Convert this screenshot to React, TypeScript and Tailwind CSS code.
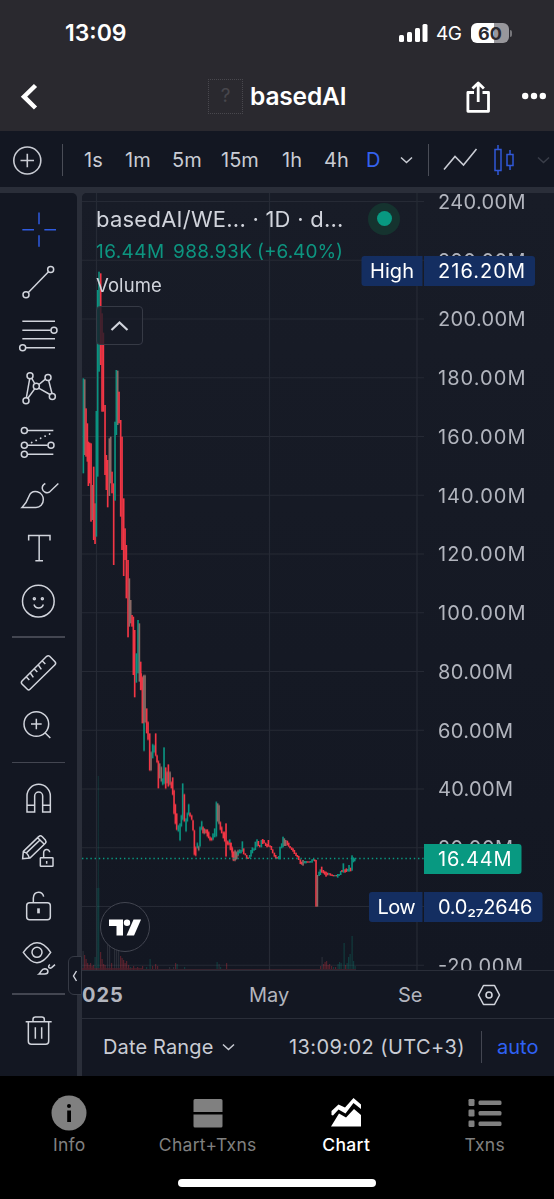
import type { ReactNode } from 'react';

type Bar = [x: number, top: number, bottom: number, kind: 'g' | 'r' | 'm'];

const barColors = { g: '#0b9280', r: '#f23645', m: '#8a6a66' };

// Price bars, three segments, each in thirds of a pixel from its own origin
const segments: { x: number; y: number; bars: Bar[] }[] = [
  {
    x: -7,
    y: 147,
    bars: [
      [25, 115, 400, 'g'], [29, 118, 345, 'm'], [33, 205, 350, 'r'], [37, 250, 365, 'r'],
      [40, 305, 438, 'r'], [44, 308, 430, 'r'], [48, 310, 545, 'r'], [52, 435, 540, 'm'],
      [56, 380, 600, 'r'], [60, 490, 612, 'r'], [64, 213, 590, 'g'], [68, -150, 410, 'g'],
      [72, -205, 95, 'g'], [77, -200, 75, 'r'], [81, -80, 215, 'r'], [85, -22, 215, 'r'],
      [90, 195, 405, 'r'], [94, 345, 450, 'r'], [98, 360, 502, 'r'], [103, 295, 468, 'm'],
      [107, 290, 430, 'm'], [111, 395, 460, 'r'], [116, 430, 675, 'r'], [120, 245, 482, 'g'],
      [124, 90, 285, 'g'], [128, 92, 255, 'm'], [132, 155, 250, 'r'], [137, 240, 530, 'r'],
      [141, 290, 630, 'r'], [146, 475, 708, 'r'], [150, 565, 660, 'r'], [154, 615, 775, 'r'],
      [159, 660, 892, 'r'], [163, 715, 860, 'm'], [167, 780, 850, 'm'], [171, 825, 860, 'r'],
      [175, 830, 1005, 'r'], [179, 870, 1072, 'r'], [184, 940, 1028, 'g'], [189, 840, 1000, 'g'],
      [193, 850, 1025, 'm'], [197, 965, 1050, 'r'],
    ],
  },
  {
    x: 28,
    y: 477,
    bars: [
      [93, 10, 60, 'r'], [97, 20, 160, 'r'], [101, 15, 160, 'm'], [102, 160, 243, 'g'],
      [105, 15, 158, 'm'], [110, 115, 190, 'r'], [114, 155, 210, 'r'], [119, 190, 302, 'r'],
      [123, 245, 302, 'm'], [128, 222, 265, 'g'], [132, 225, 248, 'g'], [137, 190, 258, 'r'],
      [141, 255, 278, 'r'], [145, 272, 355, 'r'], [149, 280, 325, 'm'], [154, 290, 335, 'm'],
      [158, 325, 345, 'g'], [162, 232, 342, 'g'], [167, 292, 356, 'r'], [171, 305, 340, 'm'],
      [175, 283, 350, 'r'], [180, 305, 345, 'm'], [184, 335, 355, 'r'], [188, 322, 375, 'r'],
      [192, 360, 432, 'r'], [196, 402, 462, 'r'], [200, 430, 480, 'r'], [205, 465, 485, 'g'],
      [210, 460, 512, 'g'], [214, 435, 470, 'g'], [218, 340, 450, 'g'], [223, 372, 455, 'r'],
      [228, 445, 485, 'g'], [232, 428, 455, 'g'], [236, 402, 435, 'g'], [240, 428, 440, 'r'],
      [245, 435, 450, 'r'], [249, 450, 482, 'r'], [253, 480, 555, 'r'], [257, 530, 558, 'r'],
      [262, 518, 535, 'g'], [266, 528, 542, 'm'], [270, 470, 530, 'g'], [275, 453, 480, 'g'],
      [279, 470, 490, 'r'], [283, 475, 492, 'm'], [288, 478, 490, 'r'], [292, 478, 500, 'r'],
      [296, 485, 505, 'r'], [300, 500, 512, 'r'], [305, 503, 512, 'r'], [309, 490, 510, 'g'],
      [314, 475, 502, 'g'], [319, 395, 500, 'g'], [323, 400, 455, 'm'], [327, 405, 462, 'm'],
      [331, 455, 480, 'r'], [335, 470, 490, 'r'], [340, 485, 505, 'r'], [344, 485, 515, 'r'],
      [348, 460, 560, 'r'], [353, 512, 525, 'r'], [357, 515, 525, 'r'], [361, 518, 540, 'r'],
      [366, 530, 548, 'r'], [370, 545, 572, 'm'], [375, 540, 573, 'm'], [379, 545, 568, 'm'],
      [384, 540, 558, 'm'],
    ],
  },
  {
    x: 148,
    y: 607,
    bars: [
      [-1, 118, 128, 'g'], [3, 128, 150, 'r'], [7, 145, 172, 'r'], [11, 155, 182, 'r'],
      [16, 155, 180, 'm'], [20, 158, 176, 'm'], [24, 155, 165, 'g'], [29, 148, 160, 'g'],
      [33, 150, 160, 'g'], [37, 124, 155, 'g'], [41, 145, 163, 'r'], [46, 160, 166, 'r'],
      [50, 165, 176, 'r'], [54, 172, 177, 'r'], [59, 165, 175, 'g'], [63, 150, 170, 'g'],
      [67, 142, 160, 'g'], [72, 145, 152, 'g'], [76, 125, 150, 'g'], [81, 118, 140, 'g'],
      [85, 123, 138, 'r'], [89, 135, 142, 'r'], [94, 120, 142, 'g'], [98, 117, 132, 'r'],
      [102, 120, 130, 'r'], [107, 128, 138, 'r'], [111, 132, 142, 'r'], [115, 120, 140, 'r'],
      [120, 136, 142, 'r'], [124, 138, 150, 'r'], [128, 148, 160, 'r'], [133, 158, 170, 'r'],
      [137, 165, 176, 'r'], [141, 171, 176, 'r'], [146, 168, 178, 'g'], [150, 140, 178, 'g'],
      [155, 130, 145, 'g'], [159, 110, 142, 'g'], [163, 115, 138, 'm'], [167, 120, 138, 'm'],
      [172, 122, 136, 'r'], [176, 128, 140, 'r'], [180, 138, 145, 'r'], [185, 142, 150, 'r'],
      [189, 145, 155, 'r'], [193, 150, 162, 'r'], [198, 158, 168, 'r'], [202, 165, 172, 'r'],
      [206, 168, 180, 'r'], [211, 178, 192, 'r'], [215, 185, 194, 'r'], [219, 180, 197, 'm'],
      [224, 183, 190, 'g'], [228, 183, 190, 'g'], [232, 184, 188, 'r'], [237, 184, 188, 'r'],
      [241, 183, 188, 'g'], [246, 178, 188, 'g'], [250, 177, 182, 'g'], [254, 178, 184, 'r'],
      [258, 180, 320, 'r'], [262, 225, 320, 'm'], [267, 215, 228, 'g'], [271, 208, 225, 'g'],
      [275, 200, 218, 'r'], [280, 210, 220, 'r'], [284, 214, 224, 'r'], [288, 215, 230, 'r'],
      [293, 218, 226, 'r'], [297, 219, 224, 'g'], [301, 220, 227, 'r'], [306, 223, 228, 'r'],
      [310, 225, 229, 'r'], [314, 225, 229, 'g'], [319, 225, 229, 'r'], [323, 222, 233, 'g'],
      [327, 222, 228, 'g'], [332, 213, 225, 'g'], [336, 210, 216, 'r'], [340, 190, 218, 'g'],
      [345, 208, 218, 'r'], [349, 205, 216, 'r'], [353, 207, 214, 'g'], [357, 195, 215, 'g'],
      [362, 203, 214, 'r'], [366, 166, 212, 'g'], [370, 172, 187, 'g'], [374, 175, 184, 'g'],
    ],
  },
];

// [x, height, kind] from the bottom edge of the plot
const volumes: [number, number, 'g' | 'r' | 'm'][] = [
  [0.5, 19, 'm'], [2, 15, 'r'], [3.5, 11, 'r'], [5, 7, 'r'], [6.5, 5, 'r'], [8, 7, 'r'],
  [9.5, 4, 'r'], [11, 5, 'r'], [12.5, 13, 'g'], [18, 18, 'r'], [19.5, 11, 'r'],
  [21, 6, 'r'], [22.5, 5, 'r'], [25, 30, 'm'], [27, 28, 'm'], [29, 7, 'r'],
  [32, 22, 'm'], [34, 26, 'm'], [36, 24, 'm'], [38, 14, 'r'], [39.5, 12, 'r'], [41, 10, 'r'],
  [42.5, 7, 'r'], [44, 9, 'r'], [46, 5, 'r'], [48, 3, 'g'], [51, 4, 'r'], [55, 3, 'r'],
  [60, 4, 'r'], [64, 3, 'g'], [67.5, 11, 'g'], [70, 4, 'r'], [73, 6, 'r'], [75, 4, 'r'],
  [87, 3, 'm'], [91, 3, 'm'], [93, 7, 'r'], [94.5, 6, 'g'], [102, 3, 'g'], [134.5, 8, 'g'],
  [136.5, 6, 'm'], [138, 3, 'g'], [144, 7, 'r'], [238, 4, 'r'], [239.5, 13, 'm'],
  [241, 6, 'r'], [242.5, 8, 'r'], [244, 9, 'r'], [245.5, 5, 'r'], [247, 6, 'r'], [249, 4, 'r'],
  [251, 3, 'g'], [253, 3, 'r'], [255.5, 6, 'g'], [257, 8, 'g'], [258.5, 7, 'g'],
  [261.5, 27, 'g'], [263, 5, 'r'], [264.5, 7, 'g'], [266, 13, 'g'], [267.5, 16, 'g'],
  [269.5, 34, 'g'], [271, 9, 'g'], [272.5, 4, 'g'],
];

const priceLabels = [
  '240.00M', '220.00M', '200.00M', '180.00M', '160.00M', '140.00M', '120.00M',
  '100.00M', '80.00M', '60.00M', '40.00M', '20.00M', '', '-20.00M',
];

const intervals = [
  { label: '1s', cell: 'w-[41px]' },
  { label: '1m', cell: 'w-[47px]' },
  { label: '5m', cell: 'w-[49px]' },
  { label: '15m', cell: 'w-[61px]' },
  { label: '1h', cell: 'w-[42px]' },
  { label: '4h', cell: 'w-[42px]' },
];

interface Tool {
  y: number;
  art: ReactNode;
}

const drawTools: Tool[] = [
  {
    y: 118.5,
    art: <path className="stroke-[#2f5be0]" d="M67 119H102M133 119H168M117 67V102M117 135V170" />,
  },
  {
    y: 277.5,
    art: (
      <>
        <circle cx="152" cy="238" r="9" />
        <circle cx="78" cy="314" r="9" />
        <path d="M85 307L145.500 244.500" />
      </>
    ),
  },
  {
    y: 436.5,
    art: (
      <>
        <path d="M67 393H165M67 420H152M67 446H165M78 473H165" />
        <circle cx="162" cy="420" r="9" />
        <circle cx="68" cy="473" r="9" />
      </>
    ),
  },
  {
    y: 595.5,
    art: (
      <>
        <path d="M89 566L79 623M95 564L104 580M117 583L136 567M116 594L150 613M104 596L83 625M146 571L156 610" />
        <circle cx="90" cy="557" r="9" />
        <circle cx="144" cy="562" r="9" />
        <circle cx="109" cy="588" r="9" />
        <circle cx="78" cy="632" r="9" />
        <circle cx="157" cy="619" r="9" />
      </>
    ),
  },
  {
    y: 94.5,
    art: (
      <>
        <path d="M83 61H160M83 105H143M83 132H160" />
        <path d="M95 97L152 70" strokeDasharray="0.1 14.800" strokeLinecap="round" strokeWidth="5.500" />
        <circle cx="73" cy="61" r="9" />
        <circle cx="73" cy="105" r="9" />
        <circle cx="153" cy="105" r="9" />
        <circle cx="73" cy="132" r="9" />
      </>
    ),
  },
  {
    y: 253.5,
    art: (
      <path d="M66 292C78 280 82 272 87 258C92 246 103 243 112 245C124 248 130 259 130 268C130 282 120 292 108 292ZM136 220C128 224 126 230 127 236C129 246 140 250 148 246L175 220" />
    ),
  },
  { y: 412.5, art: <path d="M86 391V376H150V391M117.500 376V452M106 452H129" /> },
  {
    y: 571.5,
    art: (
      <>
        <circle cx="115" cy="573" r="47.500" />
        <circle cx="103" cy="566" r="3" />
        <circle cx="127" cy="566" r="3" />
        <path d="M102 583C106 597 126 597 130 583" />
      </>
    ),
  },
];

const measureTools: Tool[] = [
  {
    y: 159,
    art: (
      <>
        <path d="M140 110Q145 106 149 110L165 126Q169 131 165 135L90 209Q86 213 82 209L66 193Q62 188 66 184Z" />
        <path d="M79 172l9 9M91 160l9 13M103 148l9 9M115 136l9 13M127 124l9 9" />
      </>
    ),
  },
  {
    y: 318,
    art: (
      <>
        <circle cx="109" cy="313" r="37" />
        <path d="M93 313H125M109 297V329M135 339L151 355" />
      </>
    ),
  },
];

const stateTools: Tool[] = [
  {
    y: 536,
    art: (
      <path d="M81 576V528A35 35 0 0 1 151 528V576H128V528A12 12 0 0 0 104 528V576ZM81 556H104M128 556H151" />
    ),
  },
  {
    y: 65,
    art: (
      <>
        <path d="M68 86L70 64L116 20Q121 14 127 20L136 30Q140 35 136 40L90 84ZM70 66Q82 66 88 84M80 68L120 30M113 23L133 43" />
        <rect x="121" y="83" width="38" height="26" rx="2" />
        <path d="M131 83V68A9 9 0 0 1 149 67M140 93V101" />
      </>
    ),
  },
  {
    y: 224,
    art: (
      <>
        <rect x="80" y="218" width="71" height="51" rx="9" />
        <path d="M100 218V204C101 193 107 187 116 187C124 187 129 192 131 200" />
        <path d="M115.500 235V250" strokeWidth="8" />
      </>
    ),
  },
  {
    y: 383,
    art: (
      <>
        <path d="M70 367C86 345 100 338 111 338C122 338 137 345 152 367C137 390 122 398 111 398C100 398 86 390 70 367Z" />
        <circle cx="111" cy="367" r="15" />
        <path d="M117 432C125 426 124 416 134 416C147 417 147 432 134 432ZM150 404C142 408 147 418 155 413L165 404" />
      </>
    ),
  },
];

const removeTools: Tool[] = [
  {
    y: 601,
    art: (
      <path d="M77 577H155M99 577V570Q99 563 106 563H126Q133 563 133 570V577M85 577V636Q85 645 94 645H137Q146 645 146 636V577M106 594V628M125 594V628" />
    ),
  },
];

function ToolGroup({ tools }: { tools: Tool[] }) {
  return (
    <div className="flex flex-col items-center">
      {tools.map((tool) => (
        <button key={tool.y} className="flex h-[53px] items-center">
          <svg
            className="h-11 w-11"
            viewBox={`51 ${tool.y - 65} 132 132`}
            fill="none"
            stroke="#d1d4dc"
            strokeWidth={4.5}
          >
            {tool.art}
          </svg>
        </button>
      ))}
    </div>
  );
}

function Divider() {
  return <div className="my-[9px] ml-3 h-[1.5px] w-[53px] bg-[#434651]" />;
}

function Chevron({ className }: { className: string }) {
  return (
    <svg className={className} viewBox="0 0 13 8" fill="none" stroke="currentColor" strokeWidth={1.5}>
      <path d="M1 1.500L6.500 6.500L12 1.500" />
    </svg>
  );
}

function StatusBar() {
  return (
    <div className="flex h-[66px] items-center pl-[65px] text-white">
      <span className="w-[334px] text-[23px] font-semibold">13:09</span>
      <svg className="h-[18px] w-[29px]" viewBox="0 0 29 18" fill="white">
        <rect x="0" y="11" width="5" height="7" rx="1.500" />
        <rect x="8" y="8" width="5" height="10" rx="1.500" />
        <rect x="16" y="4" width="5" height="14" rx="1.500" />
        <rect x="23.500" y="0" width="5" height="18" rx="1.500" />
      </svg>
      <span className="ml-2 w-[35px] pt-0.5 text-[19px] tracking-[-0.5px]">4G</span>
      <div className="relative flex h-5 w-[38px] items-center justify-center rounded-[6px] bg-[linear-gradient(90deg,#fff_60%,#98979c_60%)] text-[18px] font-bold text-[#2a292f]">
        60
        <span className="absolute -right-[3px] h-[7px] w-[2px] rounded-r bg-[#77767b]" />
      </div>
    </div>
  );
}

function Header() {
  return (
    <div className="flex h-[65px] items-center pb-1 text-white">
      <svg className="ml-5 h-7 w-[18px]" viewBox="0 0 18 28" fill="none" stroke="white" strokeWidth={4.5}>
        <path d="M15.500 2.500L4 13.700L15.500 25" />
      </svg>
      <div className="ml-[170px] flex h-[35px] w-[35px] items-center justify-center border border-dotted border-[#49484e] text-[19px] text-[#47464c]">
        ?
      </div>
      <h1 className="ml-[7px] w-[216px] text-[24.5px] font-semibold tracking-[-0.15px]">basedAI</h1>
      <svg className="h-8 w-6" viewBox="0 0 24 32" fill="none" stroke="white" strokeWidth={2.8}>
        <path d="M8 11.500H1.900V30.300H22.500V11.500H16.500M12.200 21V3M6.500 7.500L12.200 2L17.900 7.500" strokeLinejoin="round" />
      </svg>
      <svg className="mb-0.5 ml-8 h-2 w-6" viewBox="0 0 24 8" fill="white">
        <circle cx="3.200" cy="4" r="3.200" />
        <circle cx="12" cy="4" r="3.200" />
        <circle cx="20.800" cy="4" r="3.200" />
      </svg>
    </div>
  );
}

function IntervalBar() {
  return (
    <div className="flex h-14 items-center bg-[#131722] pt-px text-[20px] text-[#c9ccd4]">
      <svg className="ml-3 h-[30px] w-[30px]" viewBox="0 0 30 30" fill="none" stroke="currentColor" strokeWidth={1.6}>
        <circle cx="15.300" cy="15.500" r="13.500" />
        <path d="M8.500 15.500H22M15.300 8.700V22.300" />
      </svg>
      <div className="ml-5 mr-[21px] h-8 w-px bg-[#4a4d57]" />
      {intervals.map((item) => (
        <button key={item.label} className={`pt-px text-left ${item.cell}`}>
          {item.label}
        </button>
      ))}
      <button className="w-[34px] pt-px text-left text-[#3563ee]">D</button>
      <Chevron className="h-2 w-[13px]" />
      <div className="ml-[15px] h-8 w-px bg-[#4a4d57]" />
      <svg className="ml-3.5 h-6 w-[35px]" viewBox="0 0 35 24" fill="none" stroke="currentColor" strokeWidth={1.6}>
        <path d="M1 21.500L12 8.500L20.500 17L33.500 1" />
      </svg>
      <svg className="ml-[15px] h-[30px] w-6" viewBox="0 0 24 30" fill="none" stroke="#3058d8" strokeWidth={1.5}>
        <path d="M2 4.500H8V25.500H2ZM5 0V4.500M5 25.500V30M14 9.500H20V20.500H14ZM17 5V9.500M17 20.500V25" />
      </svg>
      <Chevron className="ml-5 h-2 w-[13px] shrink-0 text-[#3a3e49]" />
    </div>
  );
}

function PriceTag({ y, name, value, width }: { y: number; name?: string; value: string; width: number }) {
  const nameX = name === 'High' ? 279.5 : 287;
  return (
    <g fontSize="20" fill="white">
      {name && (
        <>
          <path d={`M340.5 ${y}H${nameX + 3}q-3 0 -3 3v24q0 3 3 3H340.500z`} fill="#142e61" />
          <text x={nameX + 8.500} y={y + 22} textLength={name === 'High' ? 44 : 38}>
            {name}
          </text>
        </>
      )}
      <path d={`M342 ${y}h${width - 3}q3 0 3 3v24q0 3 -3 3h-${width - 3}z`} fill={name ? '#142e61' : '#089981'} />
      <text x="356" y={y + 22} textLength={width - 24}>
        {value}
      </text>
    </g>
  );
}

function Plot() {
  return (
    <svg className="block h-[777px] w-[472px]" viewBox="0 0 472 777">
      {/* Grid */}
      <g stroke="#262a35" strokeWidth="1.200">
        {priceLabels.map((_, i) => (
          <path key={i} d={`M0 ${8.5 + i * 58.75}H342`} />
        ))}
        <path d="M14.500 0V777M187.500 0V777M335 0V777" />
      </g>

      {/* Volume */}
      <g opacity="0.400">
        <rect x="15.700" y="583" width="1.200" height="194" fill="#0b9280" opacity="0.500" />
        <rect x="14.500" y="695" width="3" height="82" fill="#0b9280" opacity="0.500" />
        {volumes.map(([x, h, kind]) => (
          <rect key={x} x={x} y={777 - h} width="1.200" height={h} fill={kind === 'm' ? '#5d616b' : barColors[kind]} opacity="0.750" />
        ))}
        <path d="M0 776H60" stroke="#a02c3a" strokeWidth="1.500" />
        <path d="M60 776.500H274" stroke="#6d3540" strokeWidth="1" />
      </g>

      {/* Price bars */}
      {segments.map((s) => (
        <g key={s.x} transform={`translate(${s.x} ${s.y}) scale(0.33333)`}>
          {s.bars.map(([x, top, bottom, kind]) => (
            <rect key={x} x={x - 2.4} y={top} width="5" height={bottom - top} fill={barColors[kind]} />
          ))}
        </g>
      ))}
      <path d="M0 665.500H342" stroke="#089981" strokeWidth="1.300" strokeDasharray="1.400 2.800" />

      {/* Price axis */}
      <g fill="#b2b5be" fontSize="20">
        {priceLabels.map(
          (label, i) =>
            label && (
              <text key={label} x={356} y={15.8 + i * 58.75} textLength={label.startsWith('-') ? 85 : label.length === 7 ? 87.5 : 75}>
                {label}
              </text>
            ),
        )}
      </g>
      <PriceTag y={63} name="High" value="216.20M" width={111} />
      <PriceTag y={651} value="16.44M" width={97.5} />
      <PriceTag y={699} name="Low" value="0.0₂₇2646" width={118.5} />
    </svg>
  );
}

function Legend() {
  return (
    <div className="absolute left-[14px] top-[13px] text-[#d1d4dc]">
      <div className="flex h-[27px] items-center">
        <span className="w-[272px] whitespace-nowrap text-[22px] tracking-[0.24px]">basedAI/WE... · 1D · d...</span>
        <span className="mb-0.5 flex h-8 w-8 items-center justify-center rounded-full bg-[#15332f]">
          <span className="h-[15px] w-[15px] rounded-full bg-[#089981]" />
        </span>
      </div>
      <div className="mt-[5px] flex h-7 items-center whitespace-nowrap text-[19px] text-[#0d9580]">
        <span className="w-[77px] tracking-[0.4px]">16.44M</span>
        <span className="w-[84px] tracking-[0.4px]">988.93K</span>
        <span className="tracking-[0px]">(+6.40%)</span>
      </div>
      <div className="mt-1.5 flex h-7 items-center text-[18.5px] tracking-[0.1px]">Volume</div>
      <button className="mt-1.5 flex h-[39px] w-[47px] items-center justify-center rounded border border-[#363a45] bg-[#181c27]/80">
        <svg className="h-3 w-5" viewBox="0 0 20 12" fill="none" stroke="currentColor" strokeWidth={2.2}>
          <path d="M1.500 10L9.500 2.500L17.500 10" />
        </svg>
      </button>
    </div>
  );
}

function TradingViewMark() {
  return (
    <div className="absolute left-[18px] top-[709px] flex h-[50px] w-[50px] items-center justify-center rounded-full border-[1.5px] border-[#434651] bg-[#131722]">
      <svg className="h-[17px] w-8" viewBox="0 0 32 17" fill="white">
        <path d="M0 0.500H14V16.500H7.500V7H0Z" />
        <circle cx="18" cy="3.700" r="3.200" />
        <path d="M24.500 0.500H32L25 16.500H17.500Z" />
      </svg>
    </div>
  );
}

function ChartPane() {
  return (
    <div className="flex w-[472px] flex-col overflow-hidden rounded-tl-[5px] bg-[#131722]">
      <div className="relative h-[777px] bg-linear-to-b from-[#181c27] to-[#131722]">
        <Plot />
        <Legend />
        <TradingViewMark />
      </div>

      {/* Time axis */}
      <div className="flex h-[49px] items-center border-y-[1.5px] border-[#2a2e39] text-[20px] text-[#b2b5be]">
        <span className="w-[167px] font-bold tracking-[1px]">025</span>
        <span className="w-[149px]">May</span>
        <span className="w-[79px]">Se</span>
        <svg className="h-[22px] w-6" viewBox="0 0 24 22" fill="none" stroke="#d1d4dc" strokeWidth={1.6}>
          <path d="M6.500 1.500H17.500L22.500 11L17.500 20.500H6.500L1.500 11Z" strokeLinejoin="round" />
          <circle cx="12" cy="11" r="3" />
        </svg>
      </div>

      {/* Range footer */}
      <div className="flex h-[56px] items-center whitespace-nowrap pl-[21px] text-[20px] text-[#c9ccd4]">
        <span className="w-[119px] tracking-[0.15px]">Date Range</span>
        <Chevron className="h-2 w-[13px]" />
        <span className="ml-[54px] w-[192px] tracking-[0.42px]">13:09:02 (UTC+3)</span>
        <div className="h-8 w-px bg-[#434651]" />
        <span className="ml-[15px] text-[#2f62f5]">auto</span>
      </div>
    </div>
  );
}

function Sidebar() {
  return (
    <div className="relative mr-[5px] w-[77px] shrink-0 rounded-tr-[5px] bg-[#131722] pt-[10px]">
      <ToolGroup tools={drawTools} />
      <Divider />
      <ToolGroup tools={measureTools} />
      <Divider />
      <ToolGroup tools={stateTools} />
      <Divider />
      <ToolGroup tools={removeTools} />
      <div className="absolute left-[68px] top-[763px] z-10 flex h-[39px] w-[14px] items-center justify-center rounded-l-md border border-[#363a45] bg-[#131722]">
        <svg className="h-3 w-1.5" viewBox="0 0 6 12" fill="none" stroke="#d1d4dc" strokeWidth={1.4}>
          <path d="M4.500 1L1.500 6L4.500 11" />
        </svg>
      </div>
    </div>
  );
}

function Tab({ label, active, children }: { label: string; active?: boolean; children: ReactNode }) {
  return (
    <button className={`flex flex-1 flex-col items-center ${active ? 'font-medium text-white' : 'text-[#808080]'}`}>
      <svg className="h-9 w-9" viewBox="0 0 36 36" fill="currentColor">
        {children}
      </svg>
      <span className="mt-[3px] text-[17.5px] leading-[22px] tracking-[0.3px]">{label}</span>
    </button>
  );
}

function TabBar() {
  return (
    <nav className="flex h-[123px] flex-col items-center bg-black">
      <div className="flex w-full pt-[19px]">
        <Tab label="Info">
          <circle cx="18" cy="18" r="17.500" />
          <circle cx="18" cy="11" r="2" fill="black" />
          <rect x="16.200" y="15.500" width="3.800" height="11.500" fill="black" />
        </Tab>
        <Tab label="Chart+Txns">
          <path d="M5 4H31q1.500 0 1.500 1.500V17H3.500V5.500Q3.500 4 5 4ZM3.500 19.500H32.500V31q0 1.500-1.500 1.500H5q-1.500 0-1.500-1.500Z" />
        </Tab>
        <Tab label="Chart" active>
          <path d="M3.500 20V16L10.500 9.500L17 12.500L25.500 3L33 9.500V14L25.500 8L17.500 18.500L10.500 14.500L5 20.500Z" />
          <path d="M3 31.500L11 18.500L18 22.500L26 14L33 20V31.500Z" />
        </Tab>
        <Tab label="Txns">
          <rect x="1.500" y="4" width="6" height="7" rx="1.200" />
          <rect x="1.500" y="14.500" width="6" height="7" rx="1.200" />
          <rect x="1.500" y="25.500" width="6" height="6.500" rx="1.200" />
          <rect x="11.500" y="5.500" width="23" height="4.500" rx="1.500" />
          <rect x="11.500" y="16" width="23" height="4.500" rx="1.500" />
          <rect x="11.500" y="26.500" width="23" height="4.500" rx="1.500" />
        </Tab>
      </div>
      <div className="mt-[23px] h-2 w-[198px] rounded-full bg-white" />
    </nav>
  );
}

export default function App() {
  return (
    <div className="h-[1199px] w-[554px] overflow-hidden bg-[#2a292f] font-['Inter',sans-serif]">
      <StatusBar />
      <Header />
      <IntervalBar />
      <div className="flex h-[889px] bg-[#2a2e39] pt-1.5">
        <Sidebar />
        <ChartPane />
      </div>
      <TabBar />
    </div>
  );
}
